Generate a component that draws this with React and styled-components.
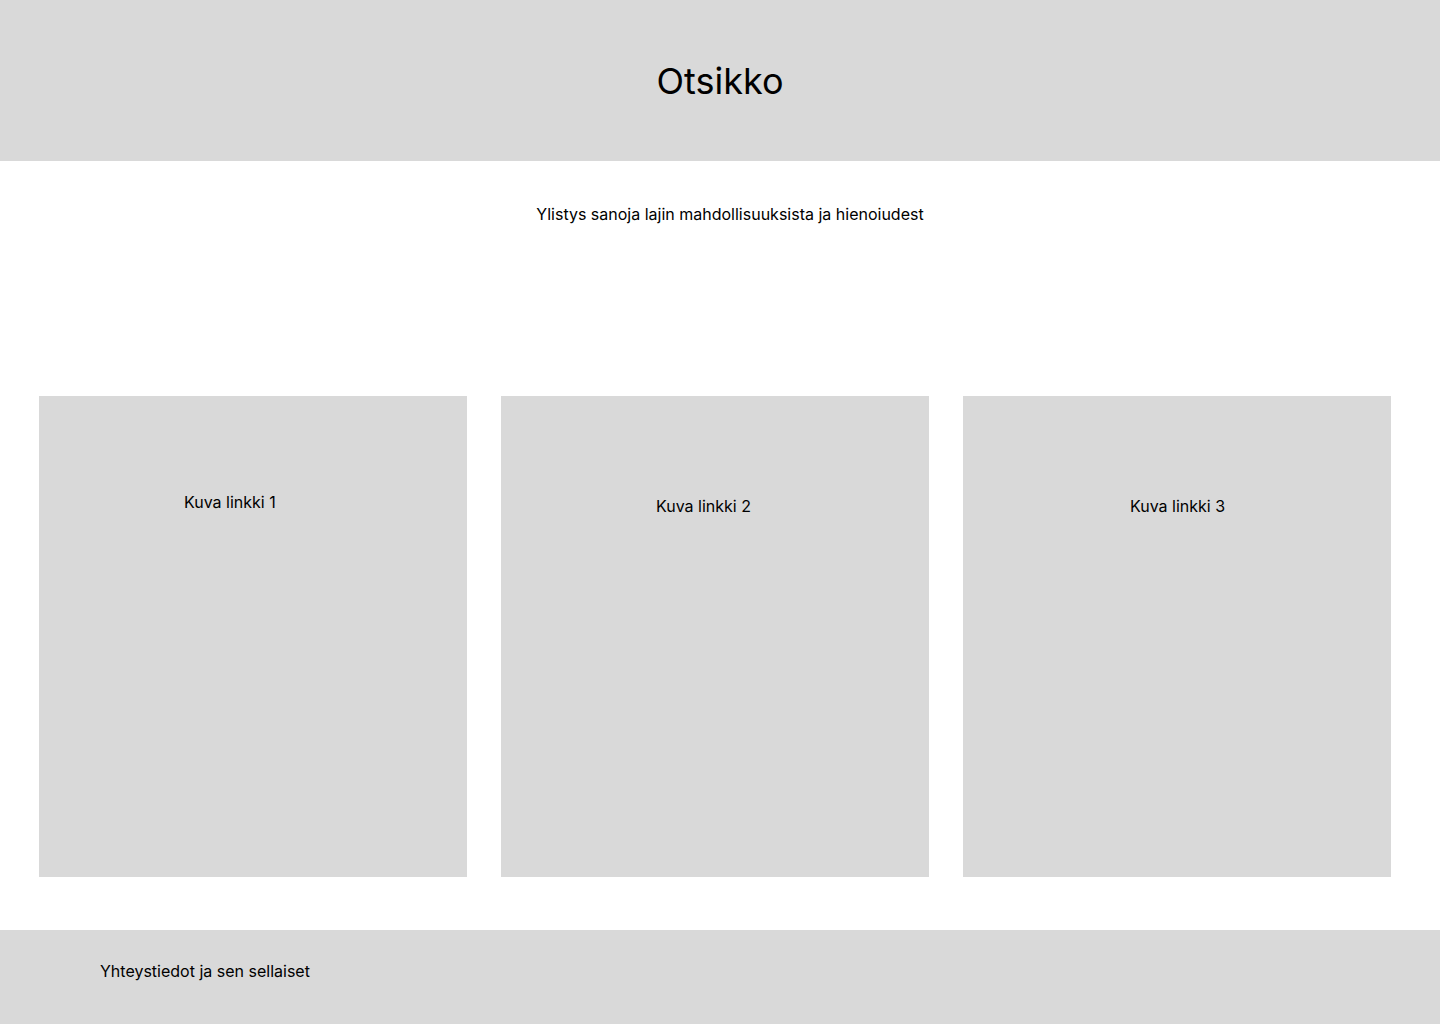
import React from 'react';
import styled, { createGlobalStyle } from 'styled-components';

const GlobalStyle = createGlobalStyle`
    html, body {
        margin: 0;
        padding: 0;
        background: #fff;
        font-family: Inter, "Noto Sans", sans-serif;
        color: #000;
    }
`;

const Page = styled.div`
    width: 1440px;
    min-height: 1024px;
    display: flex;
    flex-direction: column;
`;

const Header = styled.header`
    height: 161px;
    background: #D9D9D9;
    display: flex;
    align-items: center;
    justify-content: center;
`;

const Title = styled.h1`
    margin: 0;
    font-size: 36px;
    font-weight: 400;
    line-height: 1;
`;

const Intro = styled.section`
    height: 235px;
    box-sizing: border-box;
    padding: 44px 0 0 20px;
    text-align: center;
`;

const IntroText = styled.p`
    margin: 0;
    font-size: 16px;
    line-height: 19px;
`;

const CardRow = styled.div`
    display: flex;
    gap: 34px;
    padding-left: 39px;
    height: 481px;
`;

const Card = styled.a`
    width: 428px;
    height: 100%;
    box-sizing: border-box;
    background: #D9D9D9;
    color: #000;
    text-decoration: none;
    font-size: 16px;
    line-height: 19px;
    padding-top: ${({ $top }) => $top}px;
    padding-left: ${({ $left }) => $left}px;
`;

const Footer = styled.footer`
    margin-top: 53px;
    height: 94px;
    box-sizing: border-box;
    background: #D9D9D9;
    padding: 32px 0 0 100px;
    font-size: 16px;
    line-height: 19px;
`;

const cards = [
    { label: 'Kuva linkki 1', top: 97, left: 145 },
    { label: 'Kuva linkki 2', top: 101, left: 155 },
    { label: 'Kuva linkki 3', top: 101, left: 167 },
];

export default function App() {
    return (
        <>
            <GlobalStyle />
            <Page>
                <Header>
                    <Title>Otsikko</Title>
                </Header>
                <Intro>
                    <IntroText>Ylistys sanoja lajin mahdollisuuksista ja hienoiudest</IntroText>
                </Intro>
                <CardRow>
                    {cards.map((card) => (
                        <Card key={card.label} href="#" $top={card.top} $left={card.left}>
                            {card.label}
                        </Card>
                    ))}
                </CardRow>
                <Footer>Yhteystiedot ja sen sellaiset</Footer>
            </Page>
        </>
    );
}
